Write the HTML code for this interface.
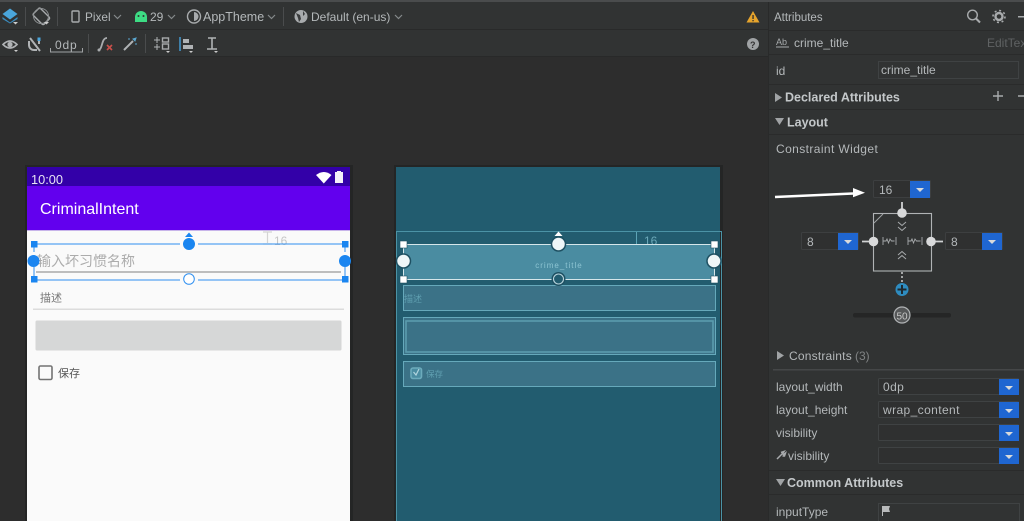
<!DOCTYPE html>
<html><head><meta charset="utf-8"><style>
html,body{margin:0;padding:0;background:#2d2d2d;width:1024px;height:521px;overflow:hidden}
svg{display:block}
text{font-family:"Liberation Sans","Noto Sans CJK SC",sans-serif;font-size:12px;fill:#b4b8ba}
.b{font-weight:bold;fill:#c4c8ca;font-size:12.500px}
.ch{fill:none;stroke:#85898b;stroke-width:1.2}
.ic{fill:none;stroke:#a8abad;stroke-width:1.4}
</style></head><body>
<svg width="1024" height="521" viewBox="0 0 1024 521" xmlns="http://www.w3.org/2000/svg">
<rect width="1024" height="521" fill="#2d2d2d"/>
<!-- toolbars -->
<rect width="770" height="57" fill="#313333"/>
<rect width="1024" height="2" fill="#4a4c4d"/>
<rect y="29" width="768" height="1" fill="#292a2a"/>
<rect y="56" width="768" height="1" fill="#282929"/>
<!-- row 1 -->
<path d="M2.500 14l7.500-5.500 7.500 5.500-7.500 5.500z" fill="#4aa6dc"/><path d="M2.500 17l7.500 5.500 7.500-5.500v2l-7.500 4.500-7.500-4.500z" fill="#3a8dc0"/>
<path d="M13 22h5l-2.500 2.500z" fill="#ccc"/>
<rect x="25" y="7" width="1" height="19" fill="#4a4c4d"/>
<rect x="57" y="7" width="1" height="19" fill="#4a4c4d"/>
<g transform="rotate(-45 41 16)"><rect x="36" y="9" width="10" height="15" rx="1.500" class="ic"/></g>
<circle cx="41" cy="16" r="7.500" fill="none" stroke="#8c8f91"/>
<path d="M44 22h5l-2.500 2.500z" fill="#ccc"/>
<rect x="72" y="11" width="7" height="11" rx="1" class="ic"/>
<text x="85" y="21" style="font-size:11.800px">Pixel</text>
<path d="M114 15l3.500 3.500 3.500-3.500" class="ch"/>
<path d="M135 21v-4a6 6 0 0 1 12 0v4z" fill="#3ddc84"/><rect x="135" y="18" width="12" height="4" fill="#3ddc84"/>
<circle cx="138.500" cy="16" r="1" fill="#313333"/><circle cx="143.500" cy="16" r="1" fill="#313333"/>
<text x="150" y="21" style="font-size:12px">29</text>
<path d="M168 15l3.500 3.500 3.500-3.500" class="ch"/>
<circle cx="194" cy="16.500" r="6.500" class="ic"/><path d="M194 12a4.500 4.500 0 0 1 0 9z" fill="#a8abad"/>
<text x="203" y="21" style="font-size:12.500px">AppTheme</text>
<path d="M268 15l3.500 3.500 3.500-3.500" class="ch"/>
<rect x="283" y="7" width="1" height="19" fill="#4a4c4d"/>
<circle cx="301" cy="16.500" r="6.500" fill="#a8abad"/><path d="M296 13l4 2 1 4-2 3-1-4zM303 11l2 3-2 2z" fill="#3a3c3d"/>
<text x="311" y="21" style="font-size:12px">Default (en-us)</text>
<path d="M395 15l3.500 3.500 3.500-3.500" class="ch"/>
<!-- row 2 -->
<path d="M3 44.500q7-7 14 0q-7 7-14 0z" fill="none" stroke="#b0b3b5" stroke-width="1.600"/><circle cx="10" cy="44.500" r="2.600" fill="#b0b3b5"/>
<path d="M14 50h4l-2 2z" fill="#ccc"/>
<path d="M30 38l10 13M29 41v4a5 5 0 0 0 5 5h3" fill="none" stroke="#b0b3b5" stroke-width="2"/><path d="M39 41v3" stroke="#b0b3b5" stroke-width="2"/><rect x="37.500" y="37.500" width="3" height="3.500" fill="#4aa6dc"/>
<text x="55" y="49" style="font-size:12px;letter-spacing:.8px">0dp</text>
<path d="M50.500 48v4h32v-4" fill="none" stroke="#a0a3a5"/>
<rect x="88" y="34" width="1" height="19" fill="#4a4c4d"/>
<path d="M98 50c5 0 3-12 9-12" fill="none" stroke="#a8abad" stroke-width="1.800"/><circle cx="99" cy="50" r="1.500" fill="#a8abad"/>
<path d="M107 45l5 5m0-5l-5 5" stroke="#c9504b" stroke-width="1.600"/>
<path d="M124 50l9-9" stroke="#b0b3b5" stroke-width="2"/><path d="M133 39l3-1-1 3zM128 39h2M137 44h-2" stroke="#5aa7d0" fill="#5aa7d0"/>
<rect x="145" y="34" width="1" height="19" fill="#4a4c4d"/>
<path d="M154 40h6M157 37v6M154 47h6M157 44v6" stroke="#b0b3b5"/><rect x="162.500" y="38" width="6" height="4" class="ic" stroke-width="1"/><rect x="162.500" y="44" width="6" height="5" class="ic" stroke-width="1"/>
<path d="M166 51h4l-2 2z" fill="#ccc"/>
<rect x="179" y="37" width="2" height="14" fill="#3f7fa8"/><rect x="183" y="39" width="6" height="4" fill="#b0b3b5"/><rect x="183" y="45" width="10" height="4" fill="#b0b3b5"/>
<path d="M189 51h4l-2 2z" fill="#ccc"/>
<path d="M208 38h8M212 38v11M207 49h10" stroke="#b0b3b5" stroke-width="1.600" fill="none"/><path d="M214 51h4l-2 2z" fill="#ccc"/>
<path d="M753 11l6.500 11.500h-13z" fill="#e6a42c"/><rect x="752.400" y="15" width="1.300" height="4" fill="#2d2d2d"/><rect x="752.400" y="20" width="1.300" height="1.300" fill="#2d2d2d"/>
<circle cx="753" cy="44" r="6" fill="#a0a3a5"/><text x="750" y="48" style="font-size:9px;font-weight:bold;fill:#333">?</text>
<!-- attributes panel -->
<rect x="768" y="2" width="256" height="519" fill="#313333"/>
<rect x="768" y="2" width="1" height="519" fill="#292a2a"/>
<text x="774" y="21" style="font-size:11.500px">Attributes</text>
<circle cx="972.500" cy="15" r="4.800" class="ic" stroke-width="1.700"/><path d="M976 18.500l4 4" stroke="#a8abad" stroke-width="2"/>
<circle cx="999" cy="16.500" r="3.500" fill="none" stroke="#a8abad" stroke-width="2.400"/><circle cx="999" cy="16.500" r="6" fill="none" stroke="#a8abad" stroke-width="1.600" stroke-dasharray="2 2.700"/>
<rect x="1018" y="16" width="6" height="1.500" fill="#a8abad"/>
<rect x="769" y="30" width="255" height="1" fill="#2a2b2b"/>
<text x="776" y="45" style="font-size:9px;fill:#a8abad">Ab</text><rect x="776" y="46.500" width="13" height="1" fill="#a8abad"/>
<text x="794" y="47">crime_title</text>
<text x="987" y="47" style="fill:#5f6263">EditText</text>
<rect x="769" y="54" width="255" height="1" fill="#2a2b2b"/>
<text x="776" y="75">id</text>
<rect x="878.500" y="61.500" width="140" height="17" fill="none" stroke="#3f4243"/>
<text x="881" y="74">crime_title</text>
<rect x="769" y="84" width="255" height="1" fill="#2a2b2b"/>
<path d="M775 93l7 4.500-7 4.500z" fill="#a0a3a5"/>
<text x="785" y="101.500" class="b">Declared Attributes</text>
<path d="M998 91v10M993 96h10M1018 96h6" stroke="#a8abad" stroke-width="1.400"/>
<rect x="769" y="109" width="255" height="1" fill="#2a2b2b"/>
<path d="M775 118h9l-4.500 7z" fill="#a0a3a5"/>
<text x="787" y="126.500" class="b">Layout</text>
<rect x="769" y="134" width="255" height="1" fill="#2a2b2b"/>
<text x="776" y="153" style="letter-spacing:.4px">Constraint Widget</text>
<!-- constraint widget -->
<path d="M775 197l78-3.500" stroke="#fff" stroke-width="2.600"/><path d="M853 188l12 4.800-12 4.500z" fill="#fff"/>
<rect x="873.500" y="180.500" width="57" height="17" rx="1" fill="#2f3030" stroke="#3d3f40"/><rect x="910" y="181" width="20" height="17" fill="#1f66d1"/><path d="M916 188h8l-4 4z" fill="#d8dadb"/>
<text x="879" y="194" style="font-size:12px">16</text>
<rect x="801.500" y="232.500" width="57" height="17" rx="1" fill="#2f3030" stroke="#3d3f40"/><rect x="838" y="233" width="20" height="17" fill="#1f66d1"/><path d="M844 240h8l-4 4z" fill="#d8dadb"/>
<text x="807" y="246" style="font-size:12px">8</text>
<rect x="945.500" y="232.500" width="57" height="17" rx="1" fill="#2f3030" stroke="#3d3f40"/><rect x="982" y="233" width="20" height="17" fill="#1f66d1"/><path d="M988 240h8l-4 4z" fill="#d8dadb"/>
<text x="951" y="246" style="font-size:12px">8</text>
<rect x="873.500" y="213.500" width="58" height="57.500" fill="none" stroke="#b0b3b5" stroke-width="1.100"/>
<path d="M874 223l9-9" stroke="#a0a3a5"/>
<path d="M902 202v10M862 241.500h10M934 241.500h9" stroke="#d0d2d3" stroke-width="1.800"/>
<circle cx="902" cy="213" r="4.800" fill="#d8d9da"/><circle cx="873.500" cy="241.500" r="4.800" fill="#d8d9da"/><circle cx="931" cy="241.500" r="4.800" fill="#d8d9da"/>
<path d="M898 222l4 3.500 4-3.500M898 227l4 3.500 4-3.500M898 259l4-3.500 4 3.500M898 255l4-3.500 4 3.500" fill="none" stroke="#a8abad" stroke-width="1"/>
<path d="M883 237v8M896 237v8M883 241h3l1-2 1.500 4 1.500-4 1.500 2h3M908 237v8M922 237v8M908 241h3l1-2 1.500 4 1.500-4 1.500 2h4" fill="none" stroke="#a8abad" stroke-width=".9"/>
<path d="M902 272v11" stroke="#c0c2c3" stroke-width="1.600" stroke-dasharray="2 2"/>
<circle cx="902" cy="289.500" r="6.500" fill="#2e8cc0"/><path d="M902 285v9M897.500 289.500h9" stroke="#1f2a30" stroke-width="2"/>
<rect x="853" y="313" width="98" height="4.500" rx="2" fill="#252626"/>
<circle cx="902" cy="315" r="8" fill="#555758" stroke="#b0b3b5" stroke-width="1.200"/>
<text x="902" y="319.500" text-anchor="middle" style="font-size:10px;fill:#c8c8c8">50</text>
<!-- constraints -->
<path d="M777 351l7 4.500-7 4.500z" fill="#a0a3a5"/>
<text x="789" y="360" style="letter-spacing:.2px">Constraints</text><text x="855" y="360" style="fill:#808384">(3)</text>
<rect x="773" y="369" width="251" height="1.500" fill="#454748"/>
<text x="776" y="391">layout_width</text>
<text x="776" y="414">layout_height</text>
<text x="776" y="437">visibility</text>
<text x="788" y="460">visibility</text>
<path d="M777 459l5-5m-1-1.500l3-1-1.500 2 1 1 2-1.500-1 3-2 0" stroke="#a8abad" stroke-width="1.500" fill="none"/>
<g>
<rect x="878.500" y="378.500" width="140" height="16" rx="1" fill="#2f3030" stroke="#3f4243"/><rect x="999" y="379" width="20" height="16" fill="#1f66d1"/><path d="M1005 386h8l-4 4z" fill="#d8dadb"/>
<rect x="878.500" y="401.500" width="140" height="16" rx="1" fill="#2f3030" stroke="#3f4243"/><rect x="999" y="402" width="20" height="16" fill="#1f66d1"/><path d="M1005 409h8l-4 4z" fill="#d8dadb"/>
<rect x="878.500" y="424.500" width="140" height="16" rx="1" fill="#2f3030" stroke="#3f4243"/><rect x="999" y="425" width="20" height="16" fill="#1f66d1"/><path d="M1005 432h8l-4 4z" fill="#d8dadb"/>
<rect x="878.500" y="447.500" width="140" height="16" rx="1" fill="#2f3030" stroke="#3f4243"/><rect x="999" y="448" width="20" height="16" fill="#1f66d1"/><path d="M1005 455h8l-4 4z" fill="#d8dadb"/>
</g>
<text x="883" y="391" style="letter-spacing:.4px">0dp</text>
<text x="883" y="414" style="letter-spacing:.4px">wrap_content</text>
<rect x="769" y="470" width="255" height="1" fill="#2a2b2b"/>
<path d="M776 479h9l-4.500 7z" fill="#a0a3a5"/>
<text x="787" y="487" class="b">Common Attributes</text>
<rect x="769" y="494" width="255" height="1" fill="#2a2b2b"/>
<text x="776" y="516">inputType</text>
<rect x="878.500" y="503.500" width="141" height="18" fill="none" stroke="#3f4243"/>
<path d="M882 506h8l-1 3 1 3h-7v4h-1z" fill="#b8babb"/>
<!-- phone 1 -->
<rect x="25" y="165" width="328" height="356" fill="#242525"/>
<rect x="27" y="167" width="323" height="354" fill="#fafafa"/>
<rect x="27" y="167" width="323" height="19" fill="#3300a8"/>
<rect x="27" y="186" width="323" height="44" fill="#6200ee"/>
<text x="31" y="184" style="font-size:12.800px;fill:#e8e4f4">10:00</text>
<path d="M316 175q8-6 15.500 0l-7.700 8.500z" fill="#fff"/><rect x="335" y="172" width="8" height="11" fill="#f4f0fa"/><rect x="337" y="171" width="4" height="2" fill="#f4f0fa"/>
<text x="40" y="214" style="font-size:16px;fill:#fff">CriminalIntent</text>
<rect x="27" y="230" width="323" height="1" fill="#c8b4ea"/>
<path d="M263 232h9M267.500 232v11M263 244h9" stroke="#d4d4d4" fill="none" stroke-width="1.200"/>
<text x="274" y="245" style="font-size:12px;fill:#c6c6c6">16</text>
<text x="37" y="266" style="font-size:14px;fill:#acacac">输入坏习惯名称</text>
<rect x="36" y="271" width="305" height="2" fill="#bdbdbd"/>
<rect x="34" y="244" width="311" height="36" fill="none" stroke="#2f8ff0" stroke-width="1"/>
<path d="M34 252v16M345 252v16" stroke="#fff" stroke-width="1" stroke-dasharray="3 3"/>
<rect x="31" y="241" width="6.500" height="6.500" fill="#1a85f0"/><rect x="342" y="241" width="6.500" height="6.500" fill="#1a85f0"/>
<rect x="31" y="276" width="6.500" height="6.500" fill="#1a85f0"/><rect x="342" y="276" width="6.500" height="6.500" fill="#1a85f0"/>
<rect x="180" y="242" width="18" height="4" fill="#fafafa"/>
<rect x="180" y="278" width="18" height="4" fill="#fafafa"/>
<path d="M185 237l4-4.500 4 4.500z" fill="#1a85f0"/>
<circle cx="189" cy="244" r="6" fill="#1a85f0"/>
<circle cx="33.500" cy="261" r="6" fill="#1a85f0"/><circle cx="345" cy="261" r="6" fill="#1a85f0"/>
<circle cx="189" cy="279" r="5.300" fill="#fff" stroke="#2f8ff0" stroke-width="1"/>
<text x="40" y="301.500" style="font-size:11px;fill:#777">描述</text>
<rect x="33" y="308.500" width="311" height="1.500" fill="#dcdcdc"/>
<rect x="35.500" y="320.500" width="306" height="30" rx="1.500" fill="#d6d7d7"/>
<rect x="39" y="366" width="13" height="13.500" rx="1.500" fill="none" stroke="#737373" stroke-width="1.600"/>
<text x="58" y="377" style="font-size:11px;fill:#555">保存</text>
<!-- phone 2 -->
<rect x="394" y="165" width="329" height="356" fill="#242525"/>
<rect x="396" y="167" width="324" height="354" fill="#225c6f"/>
<rect x="396.500" y="231.500" width="325" height="290" fill="none" stroke="#4b93a6"/>
<path d="M636.500 232v12M631 244.500h12" stroke="#5da4b6" fill="none"/>
<text x="644" y="245" style="font-size:12px;fill:#6ba8b8">16</text>
<rect x="403" y="244" width="312" height="36" fill="#4a8ca1"/>
<rect x="403.500" y="244.500" width="311" height="35" fill="none" stroke="#d5e6ea" stroke-width="1"/>
<text x="559" y="268" text-anchor="middle" style="font-size:8px;letter-spacing:1px;fill:#8cc4d2">crime_title</text>
<rect x="403.500" y="285.500" width="312" height="25" fill="#3b7287" stroke="#66a9bb"/>
<text x="404" y="302" style="font-size:9px;fill:#5f9fb0">描述</text>
<rect x="403.500" y="317.500" width="312" height="37" fill="#3b7287" stroke="#66a9bb"/>
<rect x="406" y="321" width="307" height="31" fill="none" stroke="#5a9cae" stroke-width="1.600"/>
<rect x="403.500" y="361.500" width="312" height="25" fill="#3b7287" stroke="#66a9bb"/>
<rect x="411" y="368" width="10.500" height="10.500" rx="2" fill="#4a8ca1" stroke="#6cabbc" stroke-width="1.600"/><path d="M413.500 372l2.500 3 3-6" fill="none" stroke="#b0d4de" stroke-width="1.200"/>
<text x="426" y="377" style="font-size:8.500px;fill:#5f9fb0">保存</text>
<rect x="400" y="241" width="7" height="7" fill="#fff" stroke="#1e5062" stroke-width=".6"/><rect x="711" y="241" width="7" height="7" fill="#fff" stroke="#1e5062" stroke-width=".6"/>
<rect x="400" y="276" width="7" height="7" fill="#fff" stroke="#1e5062" stroke-width=".6"/><rect x="711" y="276" width="7" height="7" fill="#fff" stroke="#1e5062" stroke-width=".6"/>
<path d="M554.500 236l4-4.500 4 4.500z" fill="#fff"/>
<circle cx="558.500" cy="244" r="7" fill="#eef6f8" stroke="#1e5062" stroke-width="1.500"/>
<circle cx="403.500" cy="261" r="7" fill="#eef6f8" stroke="#1e5062" stroke-width="1.500"/>
<circle cx="714" cy="261" r="7" fill="#eef6f8" stroke="#1e5062" stroke-width="1.500"/>
<circle cx="558.500" cy="279" r="7" fill="#1e5062"/><circle cx="558.500" cy="279" r="5" fill="#225c6f" stroke="#b8d4dc" stroke-width="1.100"/>
</svg>
</body></html>
